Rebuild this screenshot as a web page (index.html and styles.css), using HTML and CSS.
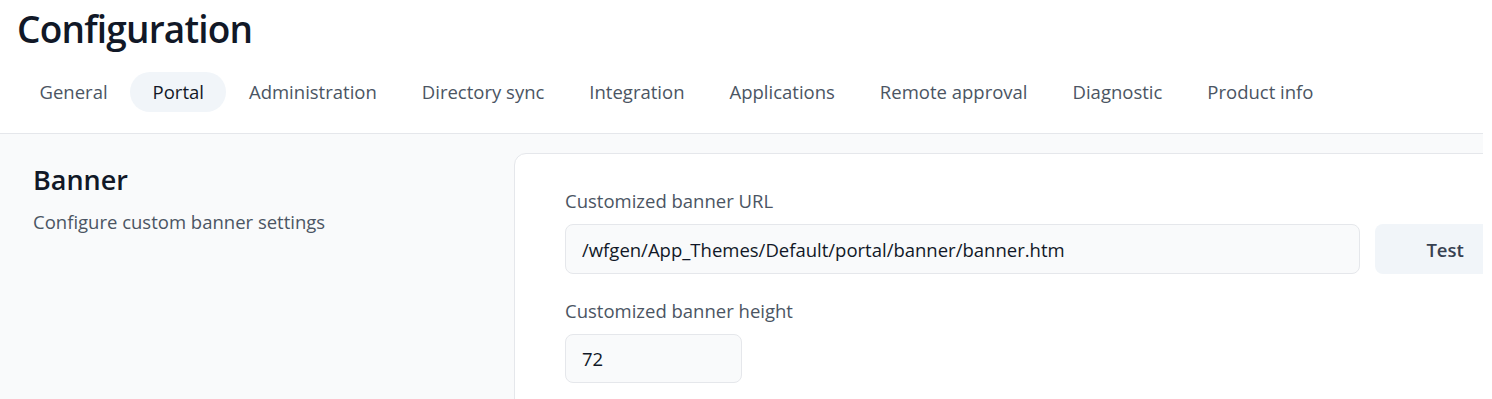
FILE: index.html
```html
<!DOCTYPE html>
<html lang="en">
  <head>
    <meta charset="UTF-8" />
    <meta name="viewport" content="width=device-width, initial-scale=1.0" />
    <title>Configuration</title>
    <link rel="stylesheet" href="styles.css">
  </head>
  <body>
    <div class="page">
      <header class="page-header">
        <h1>Configuration</h1>
        <nav class="tabs">
          <a class="tab">General</a>
          <a class="tab active">Portal</a>
          <a class="tab">Administration</a>
          <a class="tab">Directory sync</a>
          <a class="tab">Integration</a>
          <a class="tab">Applications</a>
          <a class="tab">Remote approval</a>
          <a class="tab">Diagnostic</a>
          <a class="tab">Product info</a>
        </nav>
      </header>

      <main class="content">
        <section class="section">
          <div class="section-info">
            <h2>Banner</h2>
            <p>Configure custom banner settings</p>
          </div>

          <div class="card">
            <div class="field">
              <label for="bannerUrl">Customized banner URL</label>
              <div class="input-row">
                <input type="text" id="bannerUrl" class="input url-input" value="/wfgen/App_Themes/Default/portal/banner/banner.htm" />
                <button type="button" class="btn">Test</button>
              </div>
            </div>
            <div class="field">
              <label for="bannerHeight">Customized banner height</label>
              <input type="text" id="bannerHeight" class="input small-input" value="72" />
            </div>
          </div>
        </section>
      </main>
    </div>
  </body>
</html>
```

FILE: styles.css
```css
body {
  margin: 0;
  font-family: "Open Sans", "Noto Sans", Arial, sans-serif;
  background: #fff;
  color: #111827;
  overflow: hidden;
}

.page {
  width: 1483px;
  height: 399px;
  overflow: hidden;
}

.page-header {
  padding: 0 16px 0 17px;
  border-bottom: 1px solid #e5e7eb;
  height: 134px;
  box-sizing: border-box;
}

h1 {
  margin: 0;
  padding-top: 5px;
  font-size: 37px;
  font-weight: 600;
  letter-spacing: -0.8px;
  line-height: 48px;
}

.tabs {
  display: flex;
  margin-top: 19px;
}

.tab {
  padding: 0 22.5px;
  height: 40px;
  line-height: 40px;
  border-radius: 20px;
  font-size: 18.5px;
  color: #4b5563;
  cursor: pointer;
  white-space: nowrap;
}

.tab.active {
  background: #f1f5f9;
  color: #111827;
}

.content {
  background: #f9fafb;
  height: 265px;
  padding: 19px 0 0 33px;
  box-sizing: border-box;
}

.section {
  display: grid;
  grid-template-columns: 481px 1052px;
}

.section-info h2 {
  margin: 10px 0 0;
  font-size: 27px;
  font-weight: 600;
  line-height: 34px;
}

.section-info p {
  margin: 12px 0 0;
  font-size: 18.5px;
  line-height: 26px;
  color: #4b5563;
}

.card {
  background: #fff;
  border: 1px solid #e5e7eb;
  border-radius: 12px;
  padding: 33px 50px 20px;
  height: 300px;
}

.field label {
  display: block;
  font-size: 18.5px;
  color: #4b5563;
  line-height: 28px;
  margin-bottom: 9px;
}

.field + .field {
  margin-top: 23px;
}

.input-row {
  display: flex;
  gap: 15px;
}

.input {
  height: 50px;
  box-sizing: border-box;
  padding: 0 16px;
  background: #f9fafb;
  border: 1px solid #e5e7eb;
  border-radius: 8px;
  font-family: inherit;
  font-size: 18.5px;
  color: #111827;
}

.url-input {
  width: 797px;
}

.small-input {
  width: 177px;
  height: 49px;
}

.btn {
  width: 140px;
  height: 50px;
  border: none;
  border-radius: 8px;
  background: #f1f5f9;
  font-family: inherit;
  font-size: 18.5px;
  font-weight: 600;
  color: #374151;
  cursor: pointer;
}
```
